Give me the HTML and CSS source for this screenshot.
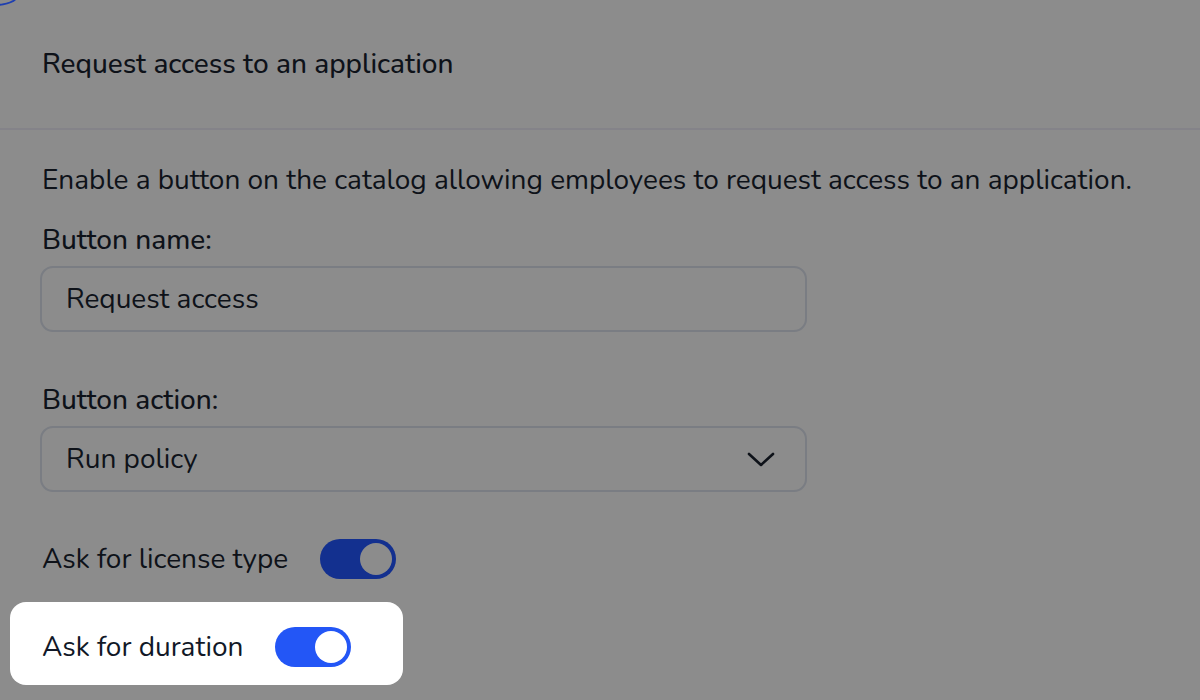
FILE: index.html
```html
<!DOCTYPE html>
<html lang="en">
<head>
<meta charset="utf-8">
<title>Request access to an application</title>
<link rel="stylesheet" href="styles.css">
</head>
<body>
<div class="corner-ring"></div>
<div class="panel">
  <header class="panel-header">
    <h1 class="panel-title">Request access to an application</h1>
  </header>
  <section class="panel-body">
    <p class="description">Enable a button on the catalog allowing employees to request access to an application.</p>
    <label class="field-label">Button name:</label>
    <div class="input-box">Request access</div>
    <label class="field-label field-label-gap">Button action:</label>
    <div class="input-box select-box">
      <span>Run policy</span>
      <svg class="chevron" width="28" height="16" viewBox="0 0 28 16"><path d="M2 2 L14 13 L26 2" fill="none" stroke="#0e1219" stroke-width="2.6" stroke-linecap="round" stroke-linejoin="round"/></svg>
    </div>
    <div class="toggle-row">
      <span class="toggle-label">Ask for license type</span>
      <span class="toggle toggle-dim"><span class="knob knob-dim"></span></span>
    </div>
    <div class="toggle-row highlight">
      <span class="toggle-label">Ask for duration</span>
      <span class="toggle toggle-bright"><span class="knob"></span></span>
    </div>
  </section>
</div>
</body>
</html>
```

FILE: styles.css
```css
html, body {
  margin: 0;
  padding: 0;
}
body {
  width: 1200px;
  height: 700px;
  overflow: hidden;
  background: #8c8c8c;
  font-family: "Nunito", "Open Sans", "Lato", sans-serif;
  color: #0e1219;
  position: relative;
}
.corner-ring {
  position: absolute;
  left: -30px;
  top: -14px;
  width: 44px;
  height: 16px;
  border-radius: 50%;
  border: 2px solid #1f3fb0;
}
.panel-header {
  height: 128px;
  display: flex;
  align-items: center;
  padding: 0 42px;
  border-bottom: 2px solid #848389;
}
.panel-title {
  margin: 0;
  font-size: 28px;
  font-weight: 500;
}
.panel-body {
  padding: 33px 42px 0;
  display: flex;
  flex-direction: column;
  align-items: flex-start;
}
.description {
  margin: 0;
  font-size: 28px;
  line-height: 34px;
}
.field-label {
  display: block;
  margin-top: 26px;
  font-size: 28px;
  line-height: 34px;
  font-weight: 500;
}
.field-label-gap {
  margin-top: 51px;
}
.input-box {
  box-sizing: border-box;
  margin-top: 9px;
  width: 767px;
  height: 66px;
  margin-left: -2px;
  border: 2px solid #7a7d83;
  border-radius: 13px;
  padding: 0 24px;
  display: flex;
  align-items: center;
  font-size: 28px;
}
.select-box {
  justify-content: space-between;
  padding-right: 30px;
}
.chevron {
  display: block;
  margin-top: 2px;
}
.toggle-row {
  display: flex;
  align-items: center;
  gap: 32px;
  margin-top: 47px;
  height: 40px;
}
.toggle-label {
  font-size: 28px;
}
.toggle {
  box-sizing: border-box;
  width: 76px;
  height: 40px;
  border-radius: 20px;
  padding: 4px;
  display: flex;
  justify-content: flex-end;
}
.toggle-dim {
  background: #13308f;
}
.toggle-bright {
  background: #2356f6;
}
.knob {
  width: 32px;
  height: 32px;
  border-radius: 50%;
  background: #ffffff;
}
.knob-dim {
  background: #8c8c8c;
}
.highlight {
  margin-top: 23px;
  margin-left: -32px;
  height: auto;
  padding: 25px 52px 18px 32px;
  background: #ffffff;
  border-radius: 16px;
  color: #111827;
}
```
